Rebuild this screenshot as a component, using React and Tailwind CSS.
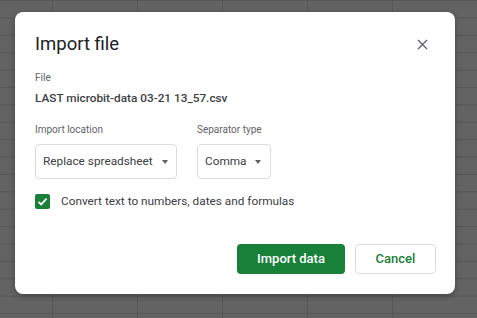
import React, { useState } from "react";

const ImportFileDialog = () => {
  const [convert, setConvert] = useState(true);

  return (
    <div
      className="w-full h-[318px] overflow-hidden pt-[12px] pl-[15px] bg-[#636363] bg-[linear-gradient(to_right,#575757_1px,transparent_1px),linear-gradient(to_bottom,#575757_1px,transparent_1px)] bg-[size:85px_17.4px] bg-[position:52px_0px]"
      style={{ fontFamily: "Roboto, 'Liberation Sans', sans-serif" }}
    >
      <div className="w-[440px] h-[282px] bg-white rounded-[8px] shadow-[0_2px_6px_rgba(0,0,0,0.3)] pt-[18px] pl-[20px] pr-[19px] flex flex-col">
        {/* Heading */}
        <div className="flex items-start justify-between">
          <h1 className="text-[18.5px] leading-[28px] text-[#202124]">
            Import file
          </h1>
          <button type="button" className="mt-[9px] mr-[8px] text-[#5f6368]">
            <svg width="11" height="11" viewBox="0 0 11 11">
              <path
                d="M1 1L10 10M10 1L1 10"
                stroke="currentColor"
                strokeWidth="1.4"
                fill="none"
              />
            </svg>
          </button>
        </div>

        {/* File */}
        <div className="mt-[13px] text-[10px] leading-[14px] text-[#5f6368]">File</div>
        <div className="mt-[4px] text-[11.8px] leading-[18px] font-medium text-[#3c4043]">
          LAST microbit-data 03-21 13_57.csv
        </div>

        {/* Options */}
        <div className="mt-[16px] flex gap-[20px]">
          <div className="flex flex-col">
            <label className="text-[10px] leading-[14px] text-[#5f6368]">
              Import location
            </label>
            <button
              type="button"
              className="mt-[7px] w-[142px] h-[35px] border border-[#dadce0] rounded-[4px] pl-[7px] flex items-center gap-[9px] text-[11.8px] text-[#3c4043]"
            >
              Replace spreadsheet
              <span className="w-0 h-0 border-l-[3.5px] border-r-[3.5px] border-t-[4px] border-l-transparent border-r-transparent border-t-[#5f6368]" />
            </button>
          </div>
          <div className="flex flex-col">
            <label className="text-[10px] leading-[14px] text-[#5f6368]">
              Separator type
            </label>
            <button
              type="button"
              className="mt-[7px] w-[74px] h-[35px] border border-[#dadce0] rounded-[4px] pl-[7px] flex items-center gap-[8px] text-[11.8px] text-[#3c4043]"
            >
              Comma
              <span className="w-0 h-0 border-l-[3.5px] border-r-[3.5px] border-t-[4px] border-l-transparent border-r-transparent border-t-[#5f6368]" />
            </button>
          </div>
        </div>

        {/* Convert checkbox */}
        <label className="mt-[13px] flex items-center gap-[11px] cursor-pointer">
          <span
            onClick={() => setConvert(!convert)}
            className={`w-[15px] h-[15px] rounded-[2px] flex items-center justify-center ${
              convert ? "bg-[#188038]" : "border-2 border-[#5f6368]"
            }`}
          >
            {convert && (
              <svg width="11" height="11" viewBox="0 0 11 11">
                <path
                  d="M1.5 5.8L4.2 8.4L9.5 2.6"
                  stroke="white"
                  strokeWidth="1.8"
                  fill="none"
                />
              </svg>
            )}
          </span>
          <span className="text-[11.8px] leading-[18px] text-[#3c4043]">
            Convert text to numbers, dates and formulas
          </span>
        </label>

        {/* Actions */}
        <div className="mt-[34px] flex justify-end gap-[10px]">
          <button
            type="button"
            className="w-[108px] h-[30px] rounded-[4px] bg-[#188038] text-white text-[13px] font-medium"
          >
            Import data
          </button>
          <button
            type="button"
            className="w-[81px] h-[30px] rounded-[4px] border border-[#dadce0] bg-white text-[#188038] text-[13px] font-medium"
          >
            Cancel
          </button>
        </div>
      </div>
    </div>
  );
};

export default function App() {
  return <ImportFileDialog />;
}
